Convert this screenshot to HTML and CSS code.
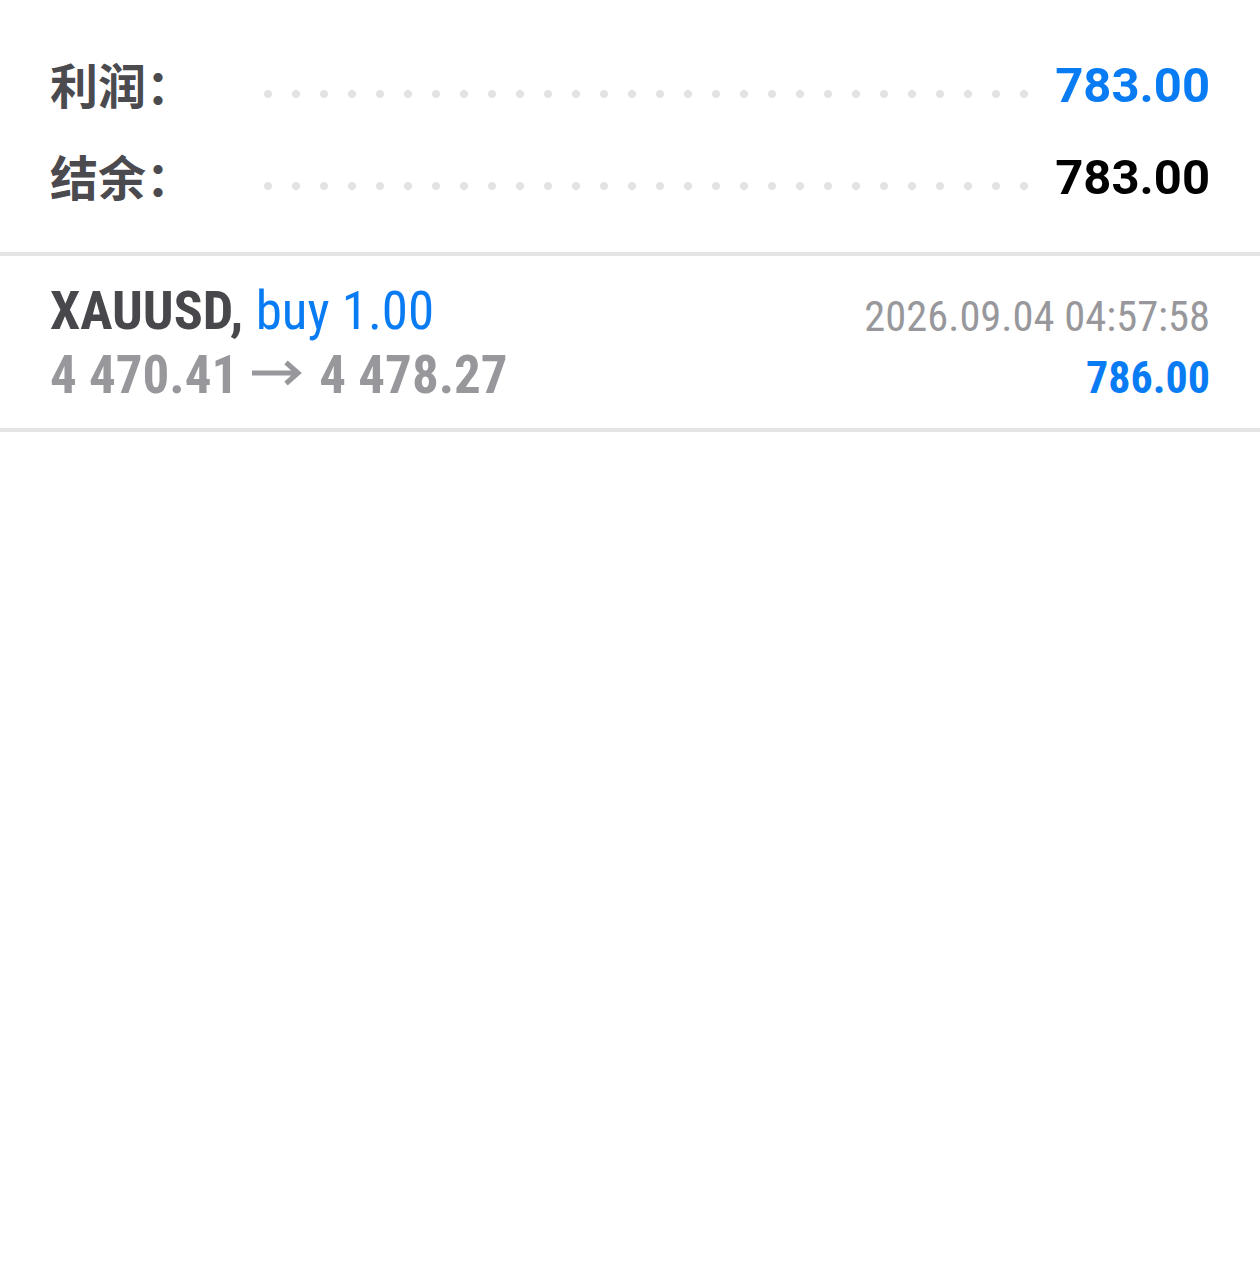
FILE: index.html
```html
<!DOCTYPE html>
<html lang="zh">
<head>
<meta charset="utf-8">
<title>交易</title>
<link rel="stylesheet" href="styles.css">
</head>
<body>
<section class="summary">
  <div class="sum-row">
    <span class="sum-label">利润：</span>
    <span class="leader"></span>
    <span class="sum-value blue">783.00</span>
  </div>
  <div class="sum-row">
    <span class="sum-label">结余：</span>
    <span class="leader"></span>
    <span class="sum-value">783.00</span>
  </div>
</section>
<section class="trade">
  <div class="trade-left">
    <div class="trade-line1"><span class="cond"><span class="symbol">XAUUSD,</span> <span class="side">buy 1.00</span></span></div>
    <div class="trade-line2"><span class="cond">4 470.41<svg class="arrow" viewBox="0 0 50 26" width="50" height="26" aria-label="→"><path d="M0 13H45M34 2.5L46 13L34 23.5" fill="none" stroke="#98989c" stroke-width="5" stroke-linejoin="miter"/></svg>4 478.27</span></div>
  </div>
  <div class="trade-right">
    <div class="trade-date"><span class="cond">2026.09.04 04:57:58</span></div>
    <div class="trade-profit"><span class="cond">786.00</span></div>
  </div>
</section>
</body>
</html>
```
FILE: styles.css
```css
html, body {
  margin: 0;
  padding: 0;
  background: #ffffff;
}

body {
  width: 1260px;
  font-family: Roboto, "Noto Sans CJK SC", sans-serif;
}

.summary {
  padding: 40px 50px 28px 50px;
  border-bottom: 4px solid #e4e4e4;
}

.sum-row {
  display: flex;
  align-items: center;
  height: 92px;
}

.sum-label {
  flex: 0 0 204px;
  font-family: "Noto Sans CJK SC", sans-serif;
  font-weight: 700;
  font-size: 48px;
  line-height: 92px;
  color: #4a4a4f;
  position: relative;
  top: -3px;
}

.leader {
  flex: 0 0 784px;
  height: 8px;
  margin-top: 16px;
  background-image: radial-gradient(circle at 14px 4px, #e3e3e3 3.6px, rgba(227,227,227,0) 4.4px);
  background-size: 28px 8px;
  background-repeat: repeat-x;
}

.sum-value {
  flex: 1;
  text-align: right;
  font-family: Roboto, sans-serif;
  font-weight: 700;
  font-size: 49px;
  line-height: 92px;
  color: #000000;
}

.blue {
  color: #0a7cf3;
}

.trade {
  display: flex;
  justify-content: space-between;
  padding: 23px 50px 21px 50px;
  border-bottom: 4px solid #e4e4e4;
}

.cond {
  display: inline-block;
  font-family: Roboto, sans-serif;
  font-stretch: condensed;
  white-space: nowrap;
}

.trade-line1 {
  font-size: 54px;
  line-height: 64px;
}

.symbol {
  font-weight: 700;
  color: #47474c;
}

.side {
  font-weight: 400;
  font-size: 53px;
  color: #0a7cf3;
}

.trade-line2 {
  font-size: 53px;
  line-height: 64px;
  font-weight: 700;
  color: #98989c;
}

.arrow {
  display: inline-block;
  vertical-align: 7px;
  margin: 0 17px 0 14px;
}

.trade-right {
  text-align: right;
  padding-top: 6px;
}

.trade-date {
  font-size: 42.5px;
  line-height: 64px;
  color: #98989c;
}

.trade-profit {
  font-size: 44px;
  line-height: 58px;
  font-weight: 700;
  color: #0a7cf3;
}
```
